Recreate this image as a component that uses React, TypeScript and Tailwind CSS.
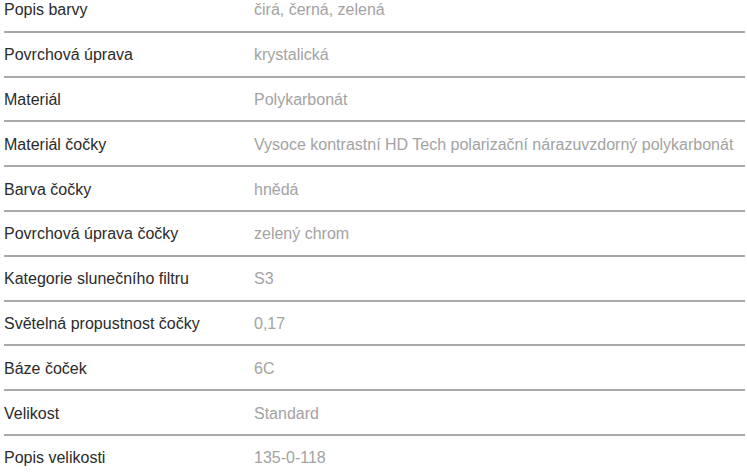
import React from 'react';

const rows: [string, string][] = [
  ['Popis barvy', 'čirá, černá, zelená'],
  ['Povrchová úprava', 'krystalická'],
  ['Materiál', 'Polykarbonát'],
  ['Materiál čočky', 'Vysoce kontrastní HD Tech polarizační nárazuvzdorný polykarbonát'],
  ['Barva čočky', 'hnědá'],
  ['Povrchová úprava čočky', 'zelený chrom'],
  ['Kategorie slunečního filtru', 'S3'],
  ['Světelná propustnost čočky', '0,17'],
  ['Báze čoček', '6C'],
  ['Velikost', 'Standard'],
  ['Popis velikosti', '135-0-118'],
];

export default function App() {
  return (
    <div className="h-[472px] overflow-hidden bg-white font-['Liberation_Sans',Arial,sans-serif] text-[16px]">
      <div className="mt-[-12px] ml-[4px] mr-[2px]">
        {rows.map(([label, value]) => (
          <div
            key={label}
            className="flex h-[44.8px] items-center border-b-2 border-[#aaaaaa] pt-[2px]"
          >
            <div className="w-[250px] shrink-0 text-[#2b2b2b]">{label}</div>
            <div className="text-[#a3a3a3] whitespace-nowrap">{value}</div>
          </div>
        ))}
      </div>
    </div>
  );
}
